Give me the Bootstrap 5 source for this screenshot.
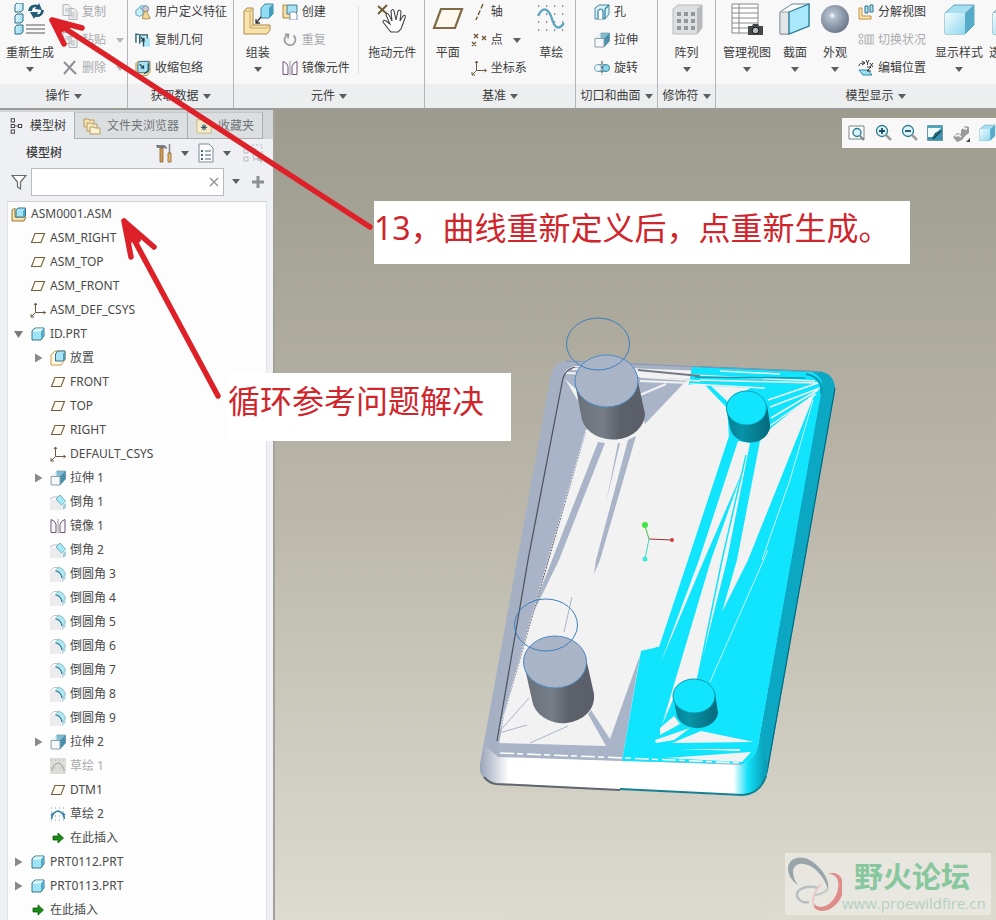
<!DOCTYPE html>
<html lang="zh-CN">
<head>
<meta charset="utf-8">
<meta name="viewport" content="width=device-width, initial-scale=1">
<title>ASM0001.ASM</title>
<link rel="stylesheet" href="https://cdn.jsdelivr.net/npm/bootstrap@5.3.0/dist/css/bootstrap.min.css">
<style>
body{font-family:"Noto Sans","Noto Sans CJK SC",sans-serif;font-size:12px;line-height:18px;color:#3c3c3c;background:#eef0f3}
button{font:inherit;color:inherit;background:none;border:0;padding:0}
button:disabled{color:#a9abac}
svg{display:block;flex:none}
.ic{width:16px;height:16px}
.caret{width:0;height:0;border:4px solid transparent;border-top:5px solid #5b5d60;border-bottom:0;flex:none}
button:disabled .caret{border-top-color:#b4b6b8}
.ribbon{background:#f8f8f9;border-bottom:2px solid #9b9b97}
.group{border-right:1px solid #b4b6b9}
.group-body{height:84px}
.group-name{height:24px;background:#eceef0}
.g1{width:128px}.g2{width:106px}.g3{width:191px}.g4{width:151px}.g5{width:82px}.g6{width:58px}.g7{width:320px}
.big{padding-top:3px}
.big svg{width:34px;height:34px}
.big .cap{margin-top:7px;margin-bottom:5px}
.b34{width:34px}.b46{width:46px}.b48{width:48px}.b57{width:57px}.b60{width:60px}.b62{width:62px}.b64{width:64px}
.smalls{margin-top:-2px}
.smalls button{height:28px;gap:4px}
.smalls .caret{margin-left:6px}
.s76{width:76px}.s57{width:57px}.s70{width:70px}
.lead7{padding-left:7px}.lead18{padding-left:18px}.lead2{padding-left:2px}
.rule{width:1px;background:#dcdee0;margin:6px 1px 10px}
.side{width:275px;background:#eef0f3;border-right:2px solid #a2a19b}
.tabs{height:29px;padding-top:2px;background:#d2d6d8}
.tabs button{height:27px;gap:6px;color:#6f7478;background:#dcdfe0;border:1px solid #a9adb0;border-top-color:#c4c8ca;padding:0 8px}
.tabs button.on{background:#eef0f3;border:0;color:#3c3c3c}
.tree-head{height:29px;padding-left:26px;padding-right:10px}
.tree-head b{font-weight:500}
.find{height:28px;padding-left:11px;gap:4px}
.find-box{width:193px;height:28px;background:#fff;border:1px solid #b9bcbf}
.find-box input{border:0;outline:0;background:transparent;min-width:0;padding:0 6px}
.tree{background:#fdfdfd;margin:5px 6px 0 7px;border:1px solid #e0e3e6;border-top-color:#ced2d5;border-bottom:0;color:#4a4a4a}
.tree button{height:24px;gap:4px;text-align:left;white-space:nowrap;width:100%}
.lv0{padding-left:3px}.lv1{padding-left:4px}.lv2{padding-left:24px}
.tw{width:14px;height:12px}
.view{background:linear-gradient(#9d9a8e,#bbb8ab 50%,#dddbd0)}
.viewbar{top:8px;right:0;width:154px;height:30px;padding:0 0 0 6px;background:#f8f8f8;overflow:hidden;gap:8px}
.viewbar svg{width:18px;height:18px}
.model{left:195px;top:200px;width:380px;height:496px}
.note{font-size:32px;line-height:40px;color:#cf252b;background:#fff;white-space:nowrap}
.n1{left:374px;top:201px;width:536px;height:63px;padding-top:7px}
.n2{left:226px;top:373px;width:285px;height:68px;padding:8px 0 0 2px}
.arrows{left:0;top:0;width:996px;height:920px;pointer-events:none}
.wm{right:5px;bottom:5px;width:206px;height:62px;background:rgba(236,235,230,.75);color:#87c79e}
.wm-name{font:700 29px/36px "Noto Sans CJK SC",sans-serif;padding-left:12px}
.wm-url{font:15px/20px "Open Sans",sans-serif;color:#b4cfc4}
</style>
<script src="https://cdn.jsdelivr.net/npm/bootstrap@5.3.0/dist/js/bootstrap.bundle.min.js"></script>
</head>
<body class="vh-100 d-flex flex-column overflow-hidden position-relative">
<svg width="0" height="0" class="position-absolute" aria-hidden="true">
<defs>
<linearGradient id="cb" x1="0" y1="0" x2="1" y2="1"><stop offset="0" stop-color="#f2fcff"/><stop offset="1" stop-color="#8dd8ee"/></linearGradient>
<radialGradient id="ball" cx=".4" cy=".38" r=".65"><stop offset="0" stop-color="#fff"/><stop offset=".18" stop-color="#b4bfce"/><stop offset=".6" stop-color="#8e9aab"/><stop offset="1" stop-color="#6d7889"/></radialGradient>
<symbol id="plane" viewBox="0 0 16 16"><path d="M5 3.500h9.500l-3.500 9h-9.500z" fill="#fdfaf0" stroke="#6f6040" stroke-width="1.100"/></symbol>
<symbol id="csys" viewBox="0 0 16 16"><path d="M5.500 1v9.500h10M5.500 10.500l-4.500 4.500M4 3l1.500-2L7 3M13.500 9l2 1.500-2 1.500M1 12v3h3" fill="none" stroke="#6b5940"/></symbol>
<symbol id="part" viewBox="0 0 16 16"><path d="M2 5l3-3h9v8l-3 4H2z" fill="#9fe3f7" stroke="#3a7285"/><path d="M2.500 5.500L5.500 2.500h8l-3 3z" fill="#dff7fe"/><path d="M11 5.500l2.500-3V10L11 13.500z" fill="#4eaac8"/></symbol>
<symbol id="asm" viewBox="0 0 16 16"><path d="M1 4l3-2v9h11l-2 4H1z" fill="#f5e3ad" stroke="#93783a"/><path d="M5 4l2-2h7.500v8l-2 1H5z" fill="#9fe3f7" stroke="#3a7285"/><path d="M12 5l2-2v7l-2 1z" fill="#4eaac8"/></symbol>
<symbol id="place" viewBox="0 0 16 16"><path d="M1 5l4-4h10v9l-4 5H1z" fill="#fff8e4" stroke="#d09a4e"/><path d="M5.500 4l2-3H15v8l-2 2H5.500z" fill="#a6e4f6" stroke="#3a7285"/><path d="M13 4l2-3v8l-2 2z" fill="#4a9fbc"/></symbol>
<symbol id="extr" viewBox="0 0 16 16"><path d="M1 7l6-6h8.500v8L10 15z" fill="#82bcd2" stroke="#7193a0" stroke-width=".7"/><path d="M1 6.500L6.500 1v5.500z" fill="#e9f3f7"/><path d="M10 6.500L15.500 1v8L10 15z" fill="#4a90ad"/><path d="M1 6.500h9V15H1z" fill="#f5f7f9" stroke="#8aa0aa"/></symbol>
<symbol id="chamf" viewBox="0 0 16 16"><path d="M0 5.500h7l6 6V16H0z" fill="#ececee"/><path d="M13 11l3-2v5l-3 2z" fill="#a9cfd9"/><path d="M0 5L3 3h5" fill="none" stroke="#b3b8bc"/><path d="M6 5l4-4 5.500 6-4 4z" fill="#a9eaf4" stroke="#4e9fb1" stroke-width=".8"/></symbol>
<symbol id="round" viewBox="0 0 16 16"><path d="M0 5.500h6q6 1 6 10.500H0z" fill="#ececee"/><path d="M12 12l3.500-3v4L12 16z" fill="#b7d9df"/><path d="M5 5L8 1.500q6 0 7.500 7L12 12Q11 6 5 5z" fill="#b0e6f0" stroke="#82b2be" stroke-width=".8"/><path d="M0 5l4-3.500h4" fill="none" stroke="#b0b8bc" stroke-width=".8"/><path d="M6 5q5 1 6 7" fill="none" stroke="#2b7891" stroke-width="1.100"/></symbol>
<symbol id="mirror" viewBox="0 0 16 16"><path d="M1 1.500q4 1 5 5v8H1zM15 1.500q-4 1-5 5v8h5z" fill="#fbf9fc" stroke="#6f5577"/><path d="M8 1v14.500" stroke="#9a9a9a"/></symbol>
<symbol id="sk" viewBox="0 0 16 16"><path d="M1 2h15M1 6h15M1 10h15M1 14h15" stroke="#5fa9cf" stroke-width="1" stroke-dasharray="1 3"/><path d="M1.500 13q1-7 6.500-8 5.500 1 6.500 8M1 9l3-2M12 7l3 2" fill="none" stroke="#3b80a6" stroke-width="1.600"/></symbol>
<symbol id="skoff" viewBox="0 0 16 16"><path d="M0 0h16v16H0z" fill="#dcdcd8"/><path d="M2 13q1-7 6-8 5 1 6 8" fill="none" stroke="#b5b5ae" stroke-width="1.500"/><path d="M1 2h15M1 10h15" stroke="#aaa" stroke-dasharray="1 3"/></symbol>
<symbol id="ins" viewBox="0 0 16 16"><path d="M3 6h5V3l5.500 5L8 13v-3H3z" fill="#1b8a17" stroke="#0a5b08" stroke-width=".8"/></symbol>
<symbol id="tr" viewBox="0 0 14 12"><path d="M3 1.500v9l7.500-4.500z" fill="#888a8d"/></symbol>
<symbol id="td" viewBox="0 0 14 12"><path d="M2 3h9l-4.500 7z" fill="#77797c"/></symbol>
<symbol id="copy" viewBox="0 0 16 16"><path d="M1 .5h5l3 3v8H1zM7 4.500h5l3 3v8H7z" fill="#f0f1f2" stroke="#b1b4b6"/><path d="M3 5h4M3 7h3M9 9h4M9 11h4M9 13h4" stroke="#b9bbbd"/></symbol>
<symbol id="del" viewBox="0 0 16 16"><path d="M2 2l12 12M13 1L2 14" stroke="#8e9092" stroke-width="2"/></symbol>
<symbol id="udf" viewBox="0 0 18 16"><path d="M6 1h7v7H6z" fill="#a8e1f5" stroke="#6bb0c8"/><path d="M1 6l4-3 4 3v5l-4 2-4-2z" fill="#c7edf8" stroke="#5b9eb5"/><circle cx="12" cy="4.500" r="3.500" fill="#c5cad6" stroke="#848b9c"/><path d="M8 15l3-8h2l4 8q-4 2-9 0z" fill="#f0d79d" stroke="#a9853f"/></symbol>
<symbol id="cgeo" viewBox="0 0 17 16"><path d="M9 6h7v9H9z" fill="#a9e7fa"/><path d="M5 3h6v7H5z" fill="#b9e2ee"/><path d="M1 1v10M5 2v10M1 2h3M5 2.500h8v4M9 6v9" fill="none" stroke="#1f596b" stroke-width="1.400"/><path d="M6 5l3.500 4V5.500M9.500 9H6" fill="none" stroke="#1f3a46" stroke-width="1.200"/></symbol>
<symbol id="shrink" viewBox="0 0 17 16"><path d="M1 3l2-2h13v11l-3 4H1z" fill="#fbe9b8" stroke="#b2924c"/><path d="M3 3l2-2h10v9l-2 3H3z" fill="#abe0f2" stroke="#387084"/><path d="M5 4l4 4V5M9 8H6M14 3v8l-4 3" fill="none" stroke="#1a4f63" stroke-width="1.300"/></symbol>
<symbol id="create" viewBox="0 0 16 16"><path d="M1 1h5v9h8v4H1z" fill="#f5dfa5" stroke="#a98742"/><path d="M5 2l2-1h8v7l-2 2H5z" fill="#a8e2f5" stroke="#447f92"/><path d="M8 8h5l2 2v6H8z" fill="#fff" stroke="#7a98b0"/></symbol>
<symbol id="redo" viewBox="0 0 16 16"><path d="M11.500 3.500a5.500 5.500 0 1 1-6-.7M3 2l3.500.5-.7 4" fill="none" stroke="#999b9d" stroke-width="1.700"/></symbol>
<symbol id="axis" viewBox="0 0 16 16"><path d="M12 0L4 18" stroke="#604c22" stroke-width="1.300" stroke-dasharray="5 2"/></symbol>
<symbol id="pts" viewBox="0 0 16 16"><path d="M3 2l4 4m0-4L3 6M11 4l4 4m0-4l-4 4M1 10l4 4m0-4l-4 4" stroke="#6b5531" stroke-width="1.300"/></symbol>
<symbol id="hole" viewBox="0 0 16 16"><path d="M1 4l4-3h10v9l-4 5H1z" fill="#d5f1f8" stroke="#49889b"/><path d="M4 15V7q3-4 5 0v8M11 5v10M15 1l-4 4" fill="#fff" stroke="#2e7e99" stroke-width="1.200"/></symbol>
<symbol id="rev" viewBox="0 0 16 16"><circle cx="4" cy="8" r="3.500" fill="#eef9fc" stroke="#77a8b8"/><path d="M4 4.500h8M4 11.500h8" stroke="#77a8b8"/><circle cx="12" cy="8" r="3.500" fill="#89d6ee" stroke="#3f8ba4"/><path d="M8 1v14" stroke="#444" stroke-dasharray="3 1.500"/></symbol>
<symbol id="expl" viewBox="0 0 16 16"><path d="M1 4h3v8h9v3H1z" fill="#fbe6b6" stroke="#c29038"/><path d="M7 2h3v7H7zM12 1h3v7h-3z" fill="#a6e2f4" stroke="#2e7188"/></symbol>
<symbol id="swt" viewBox="0 0 16 16"><path d="M7 3h9v9H7zM10 3v9M13 3v9" fill="#e5e6e7" stroke="#b3b5b7"/><circle cx="3" cy="4" r="2" fill="none" stroke="#aaa"/><circle cx="3" cy="10" r="2" fill="none" stroke="#aaa"/></symbol>
<symbol id="edp" viewBox="0 0 16 16"><path d="M1 10h9l4 5H5z" fill="#9fe0f5" stroke="#2d85a3"/><path d="M1 6q0-3 5-3M4 1l3 2-3 2M8 0l1.500 3L11 0M9.500 3v2M12 3l3 4m0-4l-3 4M9 7h4l-4 4h4" fill="none" stroke="#333"/></symbol>
<symbol id="regen" viewBox="0 0 34 34"><g fill="url(#cb)" stroke="#2c6c80"><path d="M2 2l2-2h6v7l-2 2H2zM2 13l2-2h6v7l-2 2H2zM2 24l2-2h6v7l-2 2H2z"/></g><path d="M13 22h19M13 26h19M13 30h19" stroke="#8c8f91" stroke-width="1.500"/><path d="M15 8q2-8 10-6l1-2 3 7-7-1 1-2q-4 0-4 4zM31 7q-1 8-9 7l-1 2-4-7 8 0-1 2q4 1 4-4z" fill="#205c76"/></symbol>
<symbol id="assemble" viewBox="0 0 34 34"><path d="M3 8l3-3h6v17h17v5l-3 4H3z" fill="#f8e3ac" stroke="#a98946"/><path d="M3 8h6v17h17M9 8l3-3M9 25l3-3M26 25l3-3" fill="none" stroke="#caa862"/><path d="M20 5l4-4h8v10l-4 4h-8z" fill="#92dcf3" stroke="#3e87a0"/><path d="M28 5l4-4v10l-4 4z" fill="#459fbc"/><path d="M20 14l-5 6m0-4v4h4" fill="none" stroke="#333" stroke-width="1.300"/></symbol>
<symbol id="drag" viewBox="0 0 34 34"><path d="M3 3l9 8M12 2l-9 9" stroke="#6d5a31" stroke-width="1.800"/><path d="M15 28L8 19q0-3 3-1l4 3-4-9q1-3 3 0l3 6-1-10q2-3 3 0l2 9 2-9q2-2 3 1l-1 9 3-5q3-2 2 2l-4 11-3 3h-7z" fill="#fff" stroke="#444" stroke-width="1.100"/></symbol>
<symbol id="bplane" viewBox="0 0 34 34"><path d="M10 6h21l-7 19H3z" fill="#fdf9ee" stroke="#7f6a45" stroke-width="2.200"/></symbol>
<symbol id="bsk" viewBox="0 0 34 34"><path d="M4 3h28M4 11h28M4 19h28M4 27h28" stroke="#222" stroke-width="1.200" stroke-dasharray="1.200 6.800"/><path d="M4 13c6-13 12-4 14 3s6 13 12 4" fill="none" stroke="#5fa8bf" stroke-width="2.400"/></symbol>
<symbol id="patt" viewBox="0 0 34 34"><path d="M3 6l5-4h24v23l-5 6H3z" fill="#dedfe0" stroke="#b7b9bb"/><path d="M27 6l5-4v23l-5 6z" fill="#b6b8ba"/><g fill="#94979a"><path d="M7 9h4v4H7zM14 9h4v4h-4zM21 9h4v4h-4zM7 16h4v4H7zM14 16h4v4h-4zM21 16h4v4h-4zM7 23h4v4H7zM14 23h4v4h-4zM21 23h4v4h-4z"/></g></symbol>
<symbol id="mview" viewBox="0 0 34 34"><path d="M2 1h26v29H2zM2 5h26M2 10h26M2 15h26M2 20h26M2 25h26M9 1v29" fill="#fff" stroke="#85888a"/><path d="M18 23h4l1-2h5l1 2h4v9H18z" fill="#44474a"/><circle cx="25.500" cy="27.500" r="3.300" fill="#b9bdc0" stroke="#111"/></symbol>
<symbol id="sect" viewBox="0 0 34 34"><path d="M2 9l12-8h17v22l-20 8H2z" fill="#fff" stroke="#5f8590"/><path d="M2 9h9v22H2z" fill="#e3e4e6" stroke="#9ba0a4"/><path d="M11 9l20-8v22l-20 8z" fill="#a9e8fa" stroke="#2c7f97" stroke-width="1.300"/></symbol>
<symbol id="app" viewBox="0 0 34 34"><circle cx="17" cy="16" r="14" fill="url(#ball)"/></symbol>
<symbol id="disp" viewBox="0 0 34 34"><path d="M3 10l9-8h20v20l-9 9H3z" fill="#a7def0" stroke="#66a5b9"/><path d="M3 10h20v21H3z" fill="url(#cb)"/><path d="M23 10l9-8v20l-9 9z" fill="#55abc8"/></symbol>
<symbol id="fit" viewBox="0 0 18 18"><path d="M1 2h15v13H1z" fill="#fff" stroke="#7b8589"/><circle cx="9" cy="8.500" r="4" fill="#d8f2fa" stroke="#2b7b90" stroke-width="1.400"/><path d="M12 12l4 4" stroke="#7b8084" stroke-width="2"/></symbol>
<symbol id="zin" viewBox="0 0 18 18"><circle cx="8" cy="7" r="5.500" fill="#def4fa" stroke="#2b7b90" stroke-width="1.300"/><path d="M5 7h6M8 4v6" stroke="#174f66" stroke-width="1.800"/><path d="M12 11l5 5" stroke="#a09b95" stroke-width="2.500"/></symbol>
<symbol id="zout" viewBox="0 0 18 18"><circle cx="8" cy="7" r="5.500" fill="#def4fa" stroke="#2b7b90" stroke-width="1.300"/><path d="M5 7h6" stroke="#174f66" stroke-width="1.800"/><path d="M12 11l5 5" stroke="#a09b95" stroke-width="2.500"/></symbol>
<symbol id="repaint" viewBox="0 0 18 18"><path d="M1.500 1.500h15v15h-15z" fill="#4ba6c0" stroke="#6f99a5"/><path d="M2 4h13L5 14H2z" fill="#f3fafc"/><path d="M15 6l-3 6-6 3 3-6z" fill="#1c5364"/><path d="M16 4L7 13H2V16h14z" fill="#3b93ad"/><path d="M15 7l-8 8" stroke="#183f4c" stroke-width="1.500"/></symbol>
<symbol id="shade" viewBox="0 0 18 18"><path d="M1 13l4-4 4 1V6l4-4 4 1v6l-4 3-3 4-5 2z" fill="#9b9b9b"/><path d="M3 12l4-1 2 2M11 4l4 1" stroke="#efefef" stroke-width="2" fill="none"/><path d="M18 14v4h-4z" fill="#444"/></symbol>
<symbol id="tabtree" viewBox="0 0 16 20"><path d="M2 1h4v4H2zM2 8h4v4H2zM2 15h4v4H2zM11 8h4v4h-4z" fill="#fff" stroke="#444" stroke-width="1.300"/><path d="M6 10h5" stroke="#444"/></symbol>
<symbol id="folders" viewBox="0 0 18 18"><path d="M1 2h4l1 1h5v7H1z" fill="#f4e2b2" stroke="#b39c68"/><path d="M4 6h4l1 1h5v7H4z" fill="#f8e8bc" stroke="#b39c68"/><path d="M7 10h4l1 1h5v6H7z" fill="#fbf0cf" stroke="#b39c68"/></symbol>
<symbol id="fav" viewBox="0 0 18 18"><path d="M1 2h6l1 2h9v13H1z" fill="#f9edc9" stroke="#c4b184"/><path d="M9 7v7M5.500 10.500h7M6.500 8l5 5M11.500 8l-5 5" stroke="#1d4862" stroke-width="1.100"/></symbol>
<symbol id="hammer" viewBox="0 0 18 20"><path d="M1 2h8q3 1 3 4L9 5H2z" fill="#777d82"/><path d="M5 5h3v14H5z" fill="#cf9a58" stroke="#8a6230" stroke-width=".8"/><path d="M14.500 1v9" stroke="#85898c" stroke-width="1.500"/><path d="M13 10h3v9h-3z" fill="#e2b871" stroke="#8a6230" stroke-width=".8"/></symbol>
<symbol id="doc" viewBox="0 0 16 20"><path d="M1 1h10l4 4v14H1z" fill="#fbfcfd" stroke="#7e8a95"/><path d="M7 8h6M7 12h6M7 16h6" stroke="#4a6577"/><path d="M3 8h2M3 12h2M3 16h2" stroke="#4a6577" stroke-width="2"/></symbol>
<symbol id="tsearch" viewBox="0 0 20 20"><g fill="none" stroke="#b7babc"><path d="M1 6h4v4H1zM1 14h4v4H1zM9 6h4v4H9z"/><path d="M9 2h10v15H9" stroke-dasharray="2 2"/><circle cx="13" cy="13" r="3"/><path d="M15 15l4 4" stroke-width="2"/></g></symbol>
<symbol id="funnel" viewBox="0 0 16 16"><path d="M1 1.500h14L9.500 8v7l-3-2V8z" fill="#fff" stroke="#666a6d" stroke-width="1.200"/></symbol>
</defs>
</svg>

<header class="ribbon d-flex flex-nowrap overflow-hidden flex-shrink-0">
<section class="group g1 flex-shrink-0"><div class="group-body d-flex">
<button class="big b60 d-flex flex-column align-items-center"><svg><use href="#regen"/></svg><span class="cap text-nowrap">重新生成</span><span class="caret"></span></button>
<div class="smalls lead2 d-flex flex-column">
<button disabled class="d-flex align-items-center"><svg class="ic"><use href="#copy"/></svg>复制</button>
<button disabled class="d-flex align-items-center"><svg class="ic"><use href="#copy"/></svg>粘贴<span class="caret"></span></button>
<button disabled class="d-flex align-items-center"><svg class="ic"><use href="#del"/></svg>删除<span class="caret"></span></button></div></div>
<div class="group-name d-flex align-items-center justify-content-center gap-1">操作<span class="caret"></span></div></section>

<section class="group g2 flex-shrink-0"><div class="group-body d-flex"><div class="smalls lead7 d-flex flex-column">
<button class="d-flex align-items-center"><svg class="ic"><use href="#udf"/></svg>用户定义特征</button>
<button class="d-flex align-items-center"><svg class="ic"><use href="#cgeo"/></svg>复制几何</button>
<button class="d-flex align-items-center"><svg class="ic"><use href="#shrink"/></svg>收缩包络</button></div></div>
<div class="group-name d-flex align-items-center justify-content-center gap-1">获取数据<span class="caret"></span></div></section>

<section class="group g3 flex-shrink-0"><div class="group-body d-flex">
<button class="big b48 d-flex flex-column align-items-center"><svg><use href="#assemble"/></svg><span class="cap">组装</span><span class="caret"></span></button>
<div class="smalls s76 d-flex flex-column">
<button class="d-flex align-items-center"><svg class="ic"><use href="#create"/></svg>创建</button>
<button disabled class="d-flex align-items-center"><svg class="ic"><use href="#redo"/></svg>重复</button>
<button class="d-flex align-items-center"><svg class="ic"><use href="#mirror"/></svg>镜像元件</button></div>
<div class="rule"></div>
<button class="big b64 d-flex flex-column align-items-center"><svg><use href="#drag"/></svg><span class="cap text-nowrap">拖动元件</span></button></div>
<div class="group-name d-flex align-items-center justify-content-center gap-1">元件<span class="caret"></span></div></section>

<section class="group g4 flex-shrink-0"><div class="group-body d-flex">
<button class="big b46 d-flex flex-column align-items-center"><svg><use href="#bplane"/></svg><span class="cap">平面</span></button>
<div class="smalls s57 d-flex flex-column">
<button class="d-flex align-items-center"><svg class="ic"><use href="#axis"/></svg>轴</button>
<button class="d-flex align-items-center"><svg class="ic"><use href="#pts"/></svg>点<span class="caret"></span></button>
<button class="d-flex align-items-center text-nowrap"><svg class="ic"><use href="#csys"/></svg>坐标系</button></div>
<button class="big b48 d-flex flex-column align-items-center"><svg><use href="#bsk"/></svg><span class="cap">草绘</span></button></div>
<div class="group-name d-flex align-items-center justify-content-center gap-1">基准<span class="caret"></span></div></section>

<section class="group g5 flex-shrink-0"><div class="group-body d-flex"><div class="smalls lead18 d-flex flex-column">
<button class="d-flex align-items-center"><svg class="ic"><use href="#hole"/></svg>孔</button>
<button class="d-flex align-items-center"><svg class="ic"><use href="#extr"/></svg>拉伸</button>
<button class="d-flex align-items-center"><svg class="ic"><use href="#rev"/></svg>旋转</button></div></div>
<div class="group-name d-flex align-items-center justify-content-center gap-1">切口和曲面<span class="caret"></span></div></section>

<section class="group g6 flex-shrink-0"><div class="group-body d-flex">
<button class="big b57 d-flex flex-column align-items-center"><svg><use href="#patt"/></svg><span class="cap">阵列</span><span class="caret"></span></button></div>
<div class="group-name d-flex align-items-center justify-content-center gap-1">修饰符<span class="caret"></span></div></section>

<section class="group g7 flex-shrink-0"><div class="group-body d-flex">
<button class="big b62 d-flex flex-column align-items-center"><svg><use href="#mview"/></svg><span class="cap text-nowrap">管理视图</span><span class="caret"></span></button>
<button class="big b34 d-flex flex-column align-items-center"><svg><use href="#sect"/></svg><span class="cap">截面</span><span class="caret"></span></button>
<button class="big b46 d-flex flex-column align-items-center"><svg><use href="#app"/></svg><span class="cap">外观</span><span class="caret"></span></button>
<div class="smalls d-flex flex-column s70">
<button class="d-flex align-items-center"><svg class="ic"><use href="#expl"/></svg>分解视图</button>
<button disabled class="d-flex align-items-center"><svg class="ic"><use href="#swt"/></svg>切换状况</button>
<button class="d-flex align-items-center"><svg class="ic"><use href="#edp"/></svg>编辑位置</button></div>
<button class="big b62 d-flex flex-column align-items-center"><svg><use href="#disp"/></svg><span class="cap text-nowrap">显示样式</span><span class="caret"></span></button>
<button class="big b34 d-flex flex-column align-items-center"><svg><use href="#disp"/></svg><span class="cap text-nowrap">透视图</span></button></div>
<div class="group-name d-flex align-items-center justify-content-center gap-1">模型显示<span class="caret"></span></div></section>
</header>

<main class="d-flex flex-grow-1 overflow-hidden">
<aside class="side d-flex flex-column flex-shrink-0 overflow-hidden">
<div class="tabs d-flex">
<button class="on d-flex align-items-center"><svg class="ic"><use href="#tabtree"/></svg>模型树</button>
<button class="d-flex align-items-center text-nowrap"><svg width="18" height="18"><use href="#folders"/></svg>文件夹浏览器</button>
<button class="d-flex align-items-center text-nowrap border-start-0"><svg width="16" height="16"><use href="#fav"/></svg>收藏夹</button></div>
<div class="tree-head d-flex align-items-center">
<b class="me-auto">模型树</b>
<button class="d-flex align-items-center gap-2 me-2" aria-label="设置"><svg width="18" height="20"><use href="#hammer"/></svg><span class="caret"></span></button>
<button class="d-flex align-items-center gap-2 me-2" aria-label="显示"><svg width="18" height="20"><use href="#doc"/></svg><span class="caret"></span></button>
<button disabled class="ms-1" aria-label="查找"><svg width="20" height="20"><use href="#tsearch"/></svg></button></div>
<div class="find d-flex align-items-center">
<svg class="ic"><use href="#funnel"/></svg>
<div class="find-box d-flex align-items-center"><input type="text" class="flex-grow-1" aria-label="过滤"><button class="px-1" aria-label="清除"><svg width="10" height="10"><path d="M1 1l8 8M9 1L1 9" stroke="#8b8e90" stroke-width="1.200"/></svg></button></div>
<button class="px-1" aria-label="选项"><span class="caret d-block"></span></button>
<button class="ms-1" aria-label="添加"><svg width="12" height="12"><path d="M6 0v12M0 6h12" stroke="#8b8e90" stroke-width="3"/></svg></button></div>
<div class="tree flex-grow-1 overflow-hidden" id="tree"></div>
</aside>

<section class="view flex-grow-1 position-relative overflow-hidden">
<svg class="model position-absolute" viewBox="470 310 380 496" aria-label="ID.PRT">
<defs>
<linearGradient id="gc"><stop offset="0" stop-color="#6a7078"/><stop offset=".4" stop-color="#777d87"/><stop offset=".65" stop-color="#5b6069"/><stop offset="1" stop-color="#5a5f69"/></linearGradient>
<linearGradient id="cc"><stop offset="0" stop-color="#067f93"/><stop offset=".35" stop-color="#0893a8"/><stop offset="1" stop-color="#056a7b"/></linearGradient>
<linearGradient id="bev"><stop offset="0" stop-color="#98a3b8"/><stop offset=".1" stop-color="#fff"/><stop offset=".88" stop-color="#fff"/><stop offset=".93" stop-color="#13e0f8"/><stop offset="1" stop-color="#0793ae"/></linearGradient>
</defs>
<path d="M551 375Q554 362 568 360L818 371Q836 373 835 392L768 770Q763 795 742 796L494 783Q479 780 480 764z" fill="#a5b0c4"/>
<path d="M693 366L818 371Q836 373 835 392L768 770Q765 790 745 794L742 760L822 388z" fill="#0ba7c3"/>
<path d="M835 388L767 772" stroke="#0b5f70" fill="none"/>
<path d="M484 745L497 756L742 765L760 735L768 768Q764 795 742 796L494 783Q479 780 480 766z" fill="url(#bev)"/>
<path d="M484 777Q489 783 496 784L620 790" stroke="#60656e" stroke-width="2" fill="none"/>
<path d="M620 789L742 795Q760 794 766 776" stroke="#147f90" stroke-width="2" fill="none"/>
<path d="M563 376Q566 368 574 366L812 375Q823 378 821 390L758 745Q756 758 743 764L497 756z" fill="#f2f2f2"/>
<path d="M563 376Q566 369 574 367L600 368L585 436L549 560L498 737z" fill="#a9b4c8"/>
<path d="M565 379l13 12v10z" fill="#f2f2f2"/>
<path d="M566 373L690 379L682 385L645 424L636 400L570 378z" fill="#a9b4c8"/>
<path d="M640 395l26-11M640 381l50 2M566 373l125 5M572 369l120 3" stroke="#f2f2f2" stroke-width="2"/>
<path d="M598 442l7 1L559 560L525 630L552 560zM628 440l8-4L600 560l-6 14 2-14zM618 443l2 0-14 60z" fill="#a9b4c8"/>
<path d="M586 430L548 560L500 729" stroke="#f2f2f2" stroke-dasharray="2 1"/>
<path d="M640 655L622 761L497 757V743L606 746L588 714l3-4 19 29z" fill="#a9b4c8"/>
<path d="M499 732l30-34M499 733l28-8M530 743l38-17M572 597l-8 35M500 700l8-20" stroke="#a9b4c8"/>
<path d="M692 367L812 372Q824 378 822 388L758 746Q756 758 743 764L622 761L640 657z" fill="#11e4fd"/>
<path d="M682 385L705 385L727 408L729 436L688 560L659 647L640 651L638 657L640 640L650 560z" fill="#f2f2f2"/>
<path d="M640 659l2-7 5 1 2-4 5 1 2-3 5 0-3 12z" fill="#11e4fd"/>
<path d="M711 386L750 388L728 402zM738 441L750 443L727 560L697 680L675 695L662 725L711 560L743 470L704 560L661 662L699 560zM760 441L771 428L815 393L748 560L722 612L737 560z" fill="#f2f2f2"/>
<path d="M768 400L818 383M770 407L820 388M771 418L818 390M768 427L816 394M690 375L815 381M700 380L818 383M690 384L765 388M640 377L700 381M720 371l60 3" stroke="#f2f2f2" stroke-width="1.500"/>
<path d="M768 550L710 682M813 400L790 480L762 560" stroke="#c5f5fa" fill="none"/>
<path d="M746 455L722 560L697 682" stroke="#11e4fd" stroke-width="1.500" fill="none"/>
<path d="M660 728l14-12 6 8-20 11zM655 740l35-12-16 12-18 3zM701 731L754 742L672 743zM666 758L751 752L742 762zM680 749l60 2v-2z" fill="#f2f2f2"/>
<path d="M500 753L600 757L742 763" stroke="#fff" stroke-dasharray="14 3 6 4" stroke-width="1.500" fill="none"/>
<path d="M497 741L528 560L563 378Q566 369 575 367" fill="none" stroke="#4c515b" stroke-width="1.200"/>
<path d="M638 370L700 376" stroke="#747986" stroke-width="2"/><path d="M695 377L805 378" stroke="#0d9cae" stroke-width="1.500"/>
<path d="M806 374Q824 378 821 394" fill="none" stroke="#0795af" stroke-width="2"/>
<path d="M566 361L820 372" stroke="#8b95a8"/>
<path d="M575 383L582 420A32 26 0 0 0 645 414L637 377z" fill="url(#gc)"/><ellipse cx="606.500" cy="381" rx="31.500" ry="26" fill="#a9b4c7" stroke="#4c8bc6"/>
<path d="M524 664L532 700A31 26 0 0 0 594 694L586 658z" fill="url(#gc)"/><ellipse cx="555" cy="662" rx="31.500" ry="26" fill="#a9b4c7" stroke="#4c8bc6"/>
<path d="M726 408L730 427A20 17 0 0 0 770 424L767 405z" fill="url(#cc)"/><ellipse cx="746.500" cy="408" rx="20" ry="17" fill="#11e4fd" stroke="#0a9db3"/>
<path d="M673 696L677 716A21 17 0 0 0 718 713L715 693z" fill="url(#cc)"/><ellipse cx="694" cy="696" rx="21" ry="17" fill="#11e4fd" stroke="#0a9db3"/>
<ellipse cx="598" cy="344" rx="31.500" ry="26" fill="none" stroke="#3c80bd"/><ellipse cx="546" cy="625" rx="31.500" ry="26" fill="none" stroke="#3c80bd"/>
<path d="M649 539l-4-13" stroke="#42c942"/><path d="M649 539l23 1" stroke="#9b3333"/><path d="M649 539l-4 20" stroke="#40d9d0"/>
<circle cx="645" cy="525" r="3" fill="#44e344"/><circle cx="672" cy="540" r="2" fill="#d03c3c"/><circle cx="645" cy="559" r="2.500" fill="#41e7d5"/>
</svg>
<div class="viewbar position-absolute d-flex align-items-center">
<button aria-label="重新调整"><svg><use href="#fit"/></svg></button><button aria-label="放大"><svg><use href="#zin"/></svg></button><button aria-label="缩小"><svg><use href="#zout"/></svg></button><button aria-label="重画"><svg><use href="#repaint"/></svg></button><button aria-label="渲染"><svg><use href="#shade"/></svg></button><button aria-label="显示样式"><svg><use href="#disp"/></svg></button></div>
<div class="wm position-absolute d-flex">
<svg width="57" height="62" viewBox="0 0 57 62"><g fill-rule="evenodd"><path d="M3 14C5 4 17 1 28 9C39 17 45 29 43 37Q41 27 31 17C21 8 9 9 8 18Q8 27 14 33Q2 25 3 14z" fill="#9aa5ab"/><path d="M43 21C54 17 60 27 58 38C56 51 43 61 32 57Q28 55 29 51Q35 57 44 51C54 43 56 28 50 23Q47 21 43 21z" fill="#df8d8b"/></g><g fill="none"><path d="M43 36Q37 42 29 42" stroke="#c3c8c8" stroke-width="2"/><path d="M33 35C20 31 8 38 13 45C15 49 20 50 24 49" stroke="#b9bfc1" stroke-width="2.500"/><path d="M29 53C26 47 30 37 36 31" stroke="#e9c9c6" stroke-width="2"/></g></svg>
<div class="pt-1"><div class="wm-name text-nowrap">野火论坛</div><a class="wm-url d-block text-decoration-none" href="#">www.proewildfire.cn</a></div></div>
</section>
</main>

<div class="note n1 position-absolute">13，曲线重新定义后，点重新生成。</div>
<div class="note n2 position-absolute">循环参考问题解决</div>
<svg class="arrows position-absolute" viewBox="0 0 996 920" aria-hidden="true"><g fill="none" stroke="#dd2129" stroke-width="5.500" stroke-linecap="round" stroke-linejoin="round"><path d="M370 227L52 20L82 28M52 20L64 44"/><path d="M218 396L124 221L154 247M124 221L131 257M124 221L138 240"/></g><path d="M51 18L72 27L61 33zM123 219L140 238L131 243z" fill="#dd2129"/></svg>

<script>
// Rows: level, toggle (r = closed, d = open), icon, label, disabled
const rows = [
[0,'','asm','ASM0001.ASM'],[1,'','plane','ASM_RIGHT'],[1,'','plane','ASM_TOP'],[1,'','plane','ASM_FRONT'],[1,'','csys','ASM_DEF_CSYS'],
[1,'d','part','ID.PRT'],[2,'r','place','放置'],[2,'','plane','FRONT'],[2,'','plane','TOP'],[2,'','plane','RIGHT'],[2,'','csys','DEFAULT_CSYS'],
[2,'r','extr','拉伸 1'],[2,'','chamf','倒角 1'],[2,'','mirror','镜像 1'],[2,'','chamf','倒角 2'],
...[3,4,5,6,7,8,9].map(n => [2,'','round','倒圆角 ' + n]),
[2,'r','extr','拉伸 2'],[2,'','skoff','草绘 1',1],[2,'','plane','DTM1'],[2,'','sk','草绘 2'],[2,'','ins','在此插入'],
[1,'r','part','PRT0112.PRT'],[1,'r','part','PRT0113.PRT'],[1,'','ins','在此插入']];
document.getElementById('tree').innerHTML = rows.map(([lv,t,ic,name,off]) =>
`<button class="d-flex align-items-center lv${lv}" ${off ? 'disabled' : ''}>${lv ? `<svg class="tw">${t ? `<use href="#t${t}"/>` : ''}</svg>` : ''}<svg class="ic"><use href="#${ic}"/></svg><span>${name}</span></button>`).join('');
</script>
</body>
</html>
